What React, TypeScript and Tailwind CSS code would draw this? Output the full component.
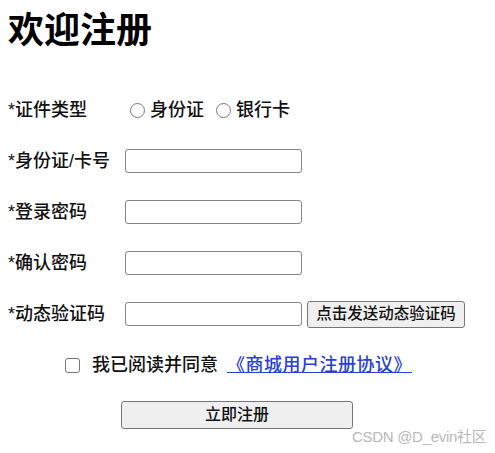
import React from 'react';

const font = { fontFamily: '"Liberation Sans", "Noto Sans CJK SC", sans-serif' };

const Field = ({ label, children }: { label: string; children?: React.ReactNode }) => (
  <div className="flex h-6 items-center">
    <span className="w-[117px] shrink-0 text-[18px] font-medium text-[#111]">{label}</span>
    {children}
  </div>
);

const TextBox = () => (
  <input
    type="text"
    className="h-6 w-[177px] shrink-0 rounded-[3px] border border-[#858585] bg-white outline-none"
  />
);

const Radio = ({ text }: { text: string }) => (
  <label className="flex items-center">
    <span className="h-[15px] w-[15px] rounded-full border border-[#7a7a7a] bg-white" />
    <span className="ml-[5px] text-[18px] font-medium text-[#111]">{text}</span>
  </label>
);

export default function App() {
  return (
    <div className="relative h-[453px] w-[495px] overflow-hidden bg-white pl-2" style={font}>
      <h1 className="mt-[9px] h-[44px] text-[36px] font-bold leading-[44px] text-black">欢迎注册</h1>

      <div className="mt-[45px] flex flex-col gap-[27px]">
        <Field label="*证件类型">
          <div className="ml-[5px] flex items-center gap-[12px]">
            <Radio text="身份证" />
            <Radio text="银行卡" />
          </div>
        </Field>
        <Field label="*身份证/卡号">
          <TextBox />
        </Field>
        <Field label="*登录密码">
          <TextBox />
        </Field>
        <Field label="*确认密码">
          <TextBox />
        </Field>
        <Field label="*动态验证码">
          <TextBox />
          <button className="ml-[5px] h-[27px] w-[158px] rounded-[3px] border border-[#767676] bg-[#efefef] text-[15.5px] font-medium text-[#111]">
            点击发送动态验证码
          </button>
        </Field>
      </div>

      <div className="mt-[27px] flex h-6 items-center pl-[57px]">
        <span className="h-[15px] w-[15px] rounded-[3px] border border-[#767676] bg-white" />
        <span className="ml-[12px] text-[18px] font-medium text-[#111]">我已阅读并同意</span>
        <a href="#" className="ml-[9px] text-[18px] font-medium tracking-[0.5px] text-[#2a3fd6] underline">
          《商城用户注册协议》
        </a>
      </div>

      <button className="ml-[113px] mt-[24px] h-[28px] w-[232px] rounded-[3px] border border-[#767676] bg-[#efefef] text-[16px] font-medium text-[#111]">
        立即注册
      </button>

      <span className="absolute left-[352px] top-[426px] text-[15px] tracking-[-0.3px] text-[#b8b8b8]">CSDN @D_evin社区</span>
    </div>
  );
}
